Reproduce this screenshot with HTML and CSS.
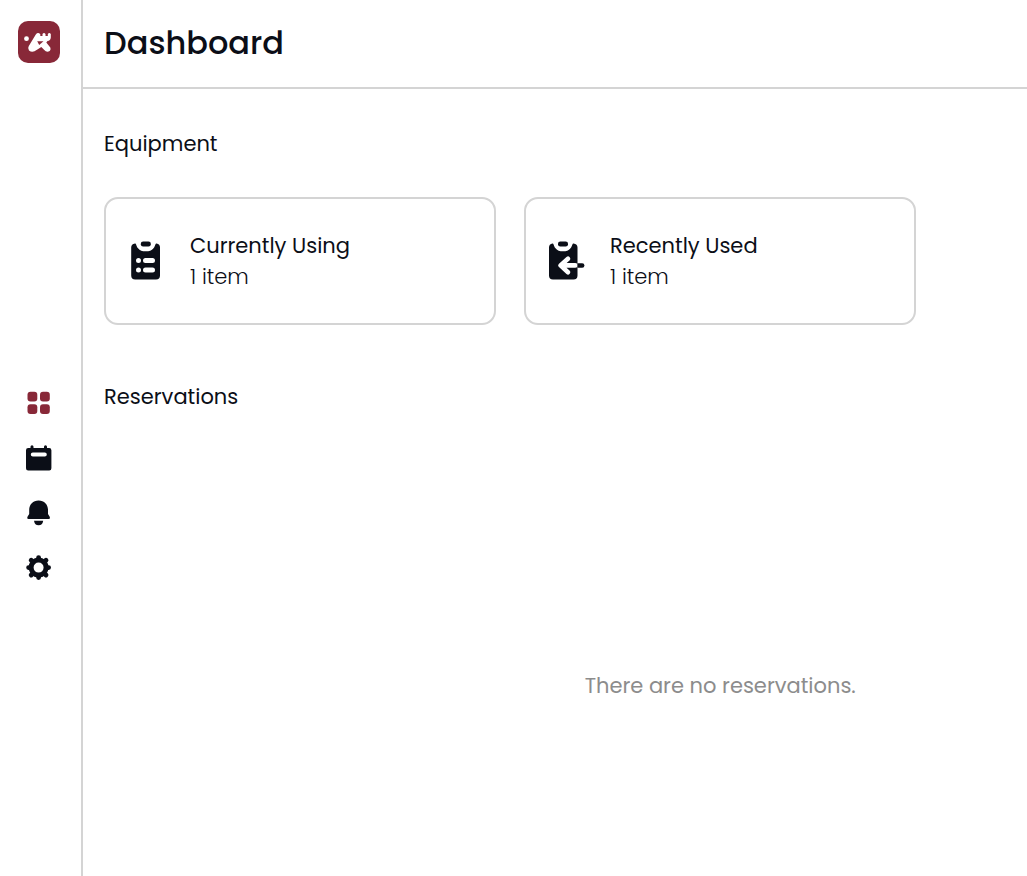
FILE: index.html
```html
<!DOCTYPE html>
<html lang="en">
<head>
<meta charset="utf-8">
<meta name="viewport" content="width=device-width, initial-scale=1">
<title>Dashboard</title>
<link rel="stylesheet" href="styles.css">
</head>
<body>
<div class="app">
  <aside class="sidebar">
    <a class="logo" href="#" aria-label="Home">
      <svg width="42" height="42" viewBox="0 0 42 42">
        <rect width="42" height="42" rx="10" fill="#882838"/>
        <circle cx="8.500" cy="17.700" r="2.400" fill="#fff"/>
        <path d="M17.800 13.500Q20 10.800 22.300 13.300V15H24.500V13Q26 11 27.500 13V15H29.800V13Q31.300 11 32.800 13V16.500Q32.500 19.800 29.500 20L28.300 21.500L32.300 26.500Q33.300 29.500 30.500 30.600Q28 31.200 26.300 29L23.300 26L19.800 28.300L16.500 30.300Q13.500 31.500 11 29.500Q9.300 27.500 10.800 25Z" fill="#fff"/>
        <path d="M19.200 20.300H25.500L21.200 24Z" fill="#882838"/>
      </svg>
    </a>
    <nav class="nav" aria-label="Main">
      <a class="nav-link active" href="#" aria-label="Dashboard" aria-current="page">
        <svg width="26" height="26" viewBox="0 0 26 26" fill="currentColor">
          <rect x="1.500" y="1.700" width="9.800" height="9.800" rx="3"/><rect x="14" y="1.700" width="9.800" height="9.800" rx="3"/><rect x="1.500" y="14.200" width="9.800" height="9.800" rx="3"/><rect x="14" y="14.200" width="9.800" height="9.800" rx="3"/>
        </svg>
      </a>
      <a class="nav-link" href="#" aria-label="Reservations">
        <svg width="26" height="26" viewBox="0 0 26 26" fill="currentColor">
          <path fill-rule="evenodd" d="M4.500 1.800a1.500 1.500 0 0 1 3 0V3H18V1.800a1.500 1.500 0 0 1 3 0V3H23.200a2.200 2.200 0 0 1 2.200 2.200v18a2.200 2.200 0 0 1-2.200 2.200H2.200a2.200 2.200 0 0 1-2.200-2.200V5.200a2.200 2.200 0 0 1 2.200-2.200H4.500ZM6.800 7.600a2 2 0 0 0 0 4H18.800a2 2 0 0 0 0-4Z"/>
        </svg>
      </a>
      <a class="nav-link" href="#" aria-label="Notifications">
        <svg width="26" height="26" viewBox="0 0 26 26" fill="currentColor">
          <path d="M12.600 .4C7 .4 3.200 4.500 3.200 9.700V14L1.500 16.800Q.7 19 2.500 19H22.700Q24.500 19 23.700 16.800L22 14V9.700C22 4.500 18.200 .4 12.600 .4ZM8 20.700H17.200Q16.500 25.300 12.600 25.300T8 20.700Z"/>
        </svg>
      </a>
      <a class="nav-link" href="#" aria-label="Settings">
        <svg width="26" height="26" viewBox="0 0 26 26" fill="none" stroke="currentColor">
          <circle cx="12.600" cy="12.600" r="7.500" stroke-width="5"/>
          <path d="M12.600 2.600V4M12.600 21.200V22.600M2.600 12.600H4M21.200 12.600H22.600M5.200 5.200L6.200 6.200M19 19L20 20M20 5.200L19 6.200M6.200 19L5.200 20" stroke-width="4.800" stroke-linecap="round"/>
        </svg>
      </a>
    </nav>
  </aside>
  <div class="page">
    <header class="header"><h1 class="title">Dashboard</h1></header>
    <main class="content">
      <section>
        <h2 class="section-title">Equipment</h2>
        <div class="cards">
          <button class="card" type="button">
            <svg class="card-icon" width="40" height="40" viewBox="0 0 40 40" fill="currentColor">
              <rect x="10.800" y=".5" width="10" height="5" rx="2.300"/>
              <path fill-rule="evenodd" d="M5 2.400C6.500 2.400 6 5 8 7.200C10 9.500 12 10.300 15.700 10.300S21.500 9.500 23.500 7.200C25.500 5 25 2.400 26.500 2.400Q30 2.800 30 6.500V34.500Q30 38.500 26 38.500H5.200Q1.200 38.500 1.200 34.500V6.500Q1.200 2.800 5 2.400ZM8.500 17a2.500 2.500 0 1 0 0 5a2.500 2.500 0 1 0 0-5ZM15.500 17a2.500 2.500 0 0 0 0 5H22.500a2.500 2.500 0 0 0 0-5ZM8.500 26.500a2.500 2.500 0 1 0 0 5a2.500 2.500 0 1 0 0-5ZM15.500 26.500a2.500 2.500 0 0 0 0 5H22.500a2.500 2.500 0 0 0 0-5Z"/>
            </svg>
            <span class="card-text"><span class="card-title">Currently Using</span><span class="card-count">1 item</span></span>
          </button>
          <button class="card" type="button">
            <svg class="card-icon" width="40" height="40" viewBox="0 0 40 40" fill="currentColor">
              <rect x="8" y=".5" width="10" height="5" rx="2.300"/>
              <path d="M2.500 2.400C4 2.400 3.500 5 5.500 7.200C7.500 9.500 9.500 10.300 13 10.300S18.500 9.500 20.500 7.200C22.500 5 22 2.400 23.500 2.400Q27.500 2.800 27.500 6.500V34.500Q27.500 38.500 23.500 38.500H3Q-1 38.500-1 34.500V6.500Q-1 2.800 2.500 2.400Z"/>
              <path d="M18 17.700L10.500 24.400L18 31.200M11 24.400H25.300" fill="none" stroke="#fff" stroke-width="4.600" stroke-linecap="round" stroke-linejoin="round"/>
              <path d="M27.500 22.300H32.200a2.200 2.200 0 0 1 0 4.400H27.500Z"/>
            </svg>
            <span class="card-text"><span class="card-title">Recently Used</span><span class="card-count">1 item</span></span>
          </button>
        </div>
      </section>
      <section class="reservations">
        <h2 class="section-title">Reservations</h2>
        <p class="empty">There are no reservations.</p>
      </section>
    </main>
  </div>
</div>
</body>
</html>
```
FILE: styles.css
```css
* { box-sizing: border-box; }
body {
  margin: 0;
  background: #fff;
  color: #0b0e17;
  font-family: Poppins, Inter, sans-serif;
  font-size: 21px;
  line-height: 31px;
}
h1, h2, p { margin: 0; }
svg { display: block; overflow: visible; }
.app { display: flex; min-height: 100vh; overflow: hidden; }
.sidebar {
  flex: none;
  width: 83px;
  padding: 21px 4px 0 0;
  border-right: 2px solid #d4d4d4;
  display: flex;
  flex-direction: column;
  align-items: center;
}
.nav {
  flex: 1;
  padding-top: 32px;
  display: flex;
  flex-direction: column;
  justify-content: center;
  gap: 29px;
}
.nav-link { color: #0b0e17; }
.nav-link.active { color: #882838; }
.page { flex: 1; min-width: 0; display: flex; flex-direction: column; }
.header { padding: 19px 21px 20px; border-bottom: 2px solid #d4d4d4; }
.title { font-size: 32px; line-height: 48px; font-weight: 500; }
.content { flex: 1; padding: 39px 21px 0; display: flex; flex-direction: column; }
.section-title { font-size: 21px; line-height: 32px; font-weight: 400; }
.cards {
  display: grid;
  grid-template-columns: repeat(auto-fit, minmax(280px, 392px));
  gap: 28px;
  margin-top: 37px;
}
.card {
  display: flex;
  align-items: center;
  gap: 20px;
  padding: 31px 24px;
  border: 2px solid #d4d4d4;
  border-radius: 14px;
  background: #fff;
  color: inherit;
  font: inherit;
  text-align: left;
}
.card-text { display: flex; flex-direction: column; }
.card-title { font-weight: 400; }
.card-count { font-weight: 300; }
.reservations { flex: 1; margin-top: 56px; display: flex; flex-direction: column; }
.empty {
  flex: 1;
  width: 120vw;
  padding-top: 82px;
  display: flex;
  align-items: center;
  justify-content: center;
  color: #8c8c8c;
}
```
